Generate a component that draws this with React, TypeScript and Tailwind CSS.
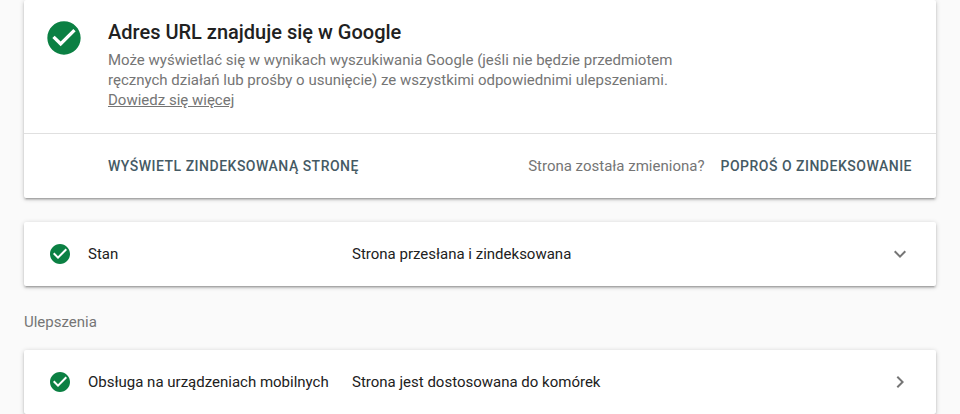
const CheckCircle = ({ className }: { className: string }) => (
  <svg viewBox="0 0 24 24" className={className} fill="currentColor">
    <path d="M12 2C6.48 2 2 6.48 2 12s4.48 10 10 10 10-4.48 10-10S17.52 2 12 2zm-2 15l-5-5 1.41-1.41L10 14.17l7.59-7.59L19 8l-9 9z" />
  </svg>
);

const cardClass =
  "rounded-xs bg-white shadow-[0_2px_2px_0_rgba(0,0,0,0.14),0_3px_1px_-2px_rgba(0,0,0,0.12),0_1px_5px_0_rgba(0,0,0,0.2)]";

const StatusRow = ({
  label,
  value,
  chevron,
}: {
  label: string;
  value: string;
  chevron: "down" | "right";
}) => (
  <div className={`${cardClass} flex h-16 items-center px-6`}>
    <CheckCircle className="size-6 shrink-0 text-[#0b8043]" />
    <span className="ml-4 w-[264px] shrink-0 whitespace-nowrap">{label}</span>
    <span className="flex-1">{value}</span>
    <svg viewBox="0 0 24 24" className="size-6 text-[#757575]" fill="currentColor">
      {chevron === "down" ? (
        <path d="M7.41 8.59L12 13.17l4.59-4.58L18 10l-6 6-6-6 1.41-1.41z" />
      ) : (
        <path d="M8.59 16.59L13.17 12 8.59 7.41 10 6l6 6-6 6-1.41-1.41z" />
      )}
    </svg>
  </div>
);

export default function App() {
  return (
    <main className="h-[414px] overflow-hidden bg-[#fafafa] px-6 font-['Roboto',sans-serif] text-[15px] leading-5 text-[#212121]">
      <section className={`${cardClass} h-[198px]`}>
        <div className="flex h-[134px] border-b border-[#e0e0e0] pl-5">
          <CheckCircle className="mt-[18px] size-10 shrink-0 text-[#0b8043]" />
          <div className="ml-6 pt-5">
            <h1 className="text-xl leading-6 font-medium">
              Adres URL znajduje się w Google
            </h1>
            <p className="mt-1.5 w-[590px] text-[#757575]">
              Może wyświetlać się w wynikach wyszukiwania Google (jeśli nie będzie przedmiotem
              <br />
              ręcznych działań lub prośby o usunięcie) ze wszystkimi odpowiednimi ulepszeniami.
              <br />
              <a className="underline">Dowiedz się więcej</a>
            </p>
          </div>
        </div>
        <div className="flex h-16 items-center pr-6 pl-[84px]">
          <button className="text-sm font-medium tracking-[0.5px] text-[#455a64]">
            WYŚWIETL ZINDEKSOWANĄ STRONĘ
          </button>
          <span className="ml-auto text-[#757575]">Strona została zmieniona?</span>
          <button className="ml-4 text-sm font-medium tracking-[0.5px] text-[#455a64]">
            POPROŚ O ZINDEKSOWANIE
          </button>
        </div>
      </section>

      <div className="mt-6">
        <StatusRow label="Stan" value="Strona przesłana i zindeksowana" chevron="down" />
      </div>

      <h2 className="mt-[26px] mb-[18px] text-[#757575]">Ulepszenia</h2>

      <StatusRow
        label="Obsługa na urządzeniach mobilnych"
        value="Strona jest dostosowana do komórek"
        chevron="right"
      />
    </main>
  );
}
